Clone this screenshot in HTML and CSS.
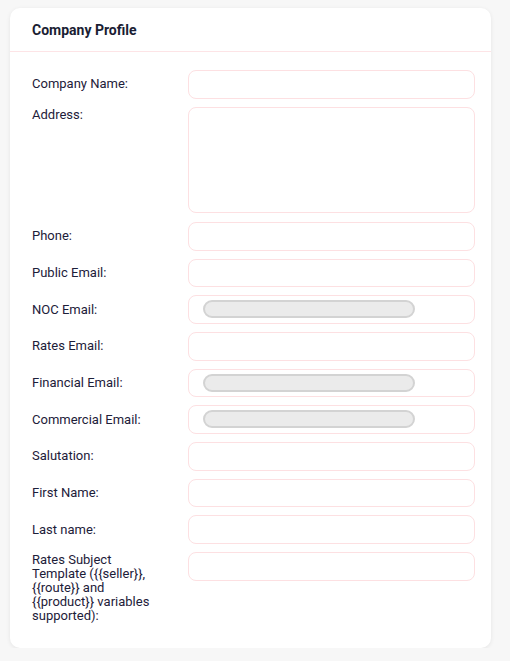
FILE: index.html
```html
<!DOCTYPE html>
<html lang="en">
<head>
<meta charset="utf-8">
<title>Company Profile</title>
<link rel="stylesheet" href="styles.css">
</head>
<body>
<div class="card">
  <div class="card-header">Company Profile</div>
  <div class="card-body">
    <div class="row"><label class="label">Company Name:</label><div class="field"><input class="input" type="text"></div></div>
    <div class="row row-top"><label class="label">Address:</label><div class="field field-tall"><textarea class="input textarea"></textarea></div></div>
    <div class="row"><label class="label">Phone:</label><div class="field"><input class="input" type="text"></div></div>
    <div class="row"><label class="label">Public Email:</label><div class="field"><input class="input" type="text"></div></div>
    <div class="row"><label class="label">NOC Email:</label><div class="field"><input class="input" type="text"><span class="redact"></span></div></div>
    <div class="row"><label class="label">Rates Email:</label><div class="field"><input class="input" type="text"></div></div>
    <div class="row"><label class="label">Financial Email:</label><div class="field"><input class="input" type="text"><span class="redact"></span></div></div>
    <div class="row"><label class="label">Commercial Email:</label><div class="field"><input class="input" type="text"><span class="redact"></span></div></div>
    <div class="row"><label class="label">Salutation:</label><div class="field"><input class="input" type="text"></div></div>
    <div class="row"><label class="label">First Name:</label><div class="field"><input class="input" type="text"></div></div>
    <div class="row"><label class="label">Last name:</label><div class="field"><input class="input" type="text"></div></div>
    <div class="row row-top"><label class="label label-multi">Rates Subject Template ({{seller}}, {{route}} and {{product}} variables supported):</label><div class="field"><input class="input" type="text"></div></div>
  </div>
</div>
</body>
</html>
```
FILE: styles.css
```css
html, body {
  margin: 0;
  padding: 0;
}
body {
  background: #f7f7f7;
  font-family: "Roboto", "Liberation Sans", sans-serif;
  color: #1d2039;
  padding: 8px 0 0 10px;
}
.card {
  width: 481px;
  height: 640px;
  box-sizing: border-box;
  background: #fff;
  border-radius: 10px;
  box-shadow: 0 1px 4px rgba(0, 0, 0, 0.08);
}
.card-header {
  height: 43px;
  border-bottom: 1px solid #fde4e6;
  padding-left: 22px;
  display: flex;
  align-items: center;
  font-weight: bold;
  font-size: 14px;
  color: #1a1d33;
}
.card-body {
  padding: 18px 16px 0 22px;
  display: flex;
  flex-direction: column;
  gap: 8px;
}
.row {
  display: grid;
  grid-template-columns: 156px 287px;
  align-items: center;
}
.row-top {
  align-items: start;
}
.label {
  font-size: 13px;
  line-height: 14px;
}
.row-top .label {
  padding-top: 1px;
}
.label-multi {
  padding-right: 32px;
}
.field {
  position: relative;
  height: 28.67px;
}
.field-tall {
  height: 107.3px;
}
.input {
  display: block;
  box-sizing: border-box;
  width: 100%;
  height: 28.67px;
  margin: 0;
  border: 1px solid #fde0e2;
  border-radius: 8px;
  background: #fff;
  outline: none;
  font: inherit;
}
.textarea {
  height: 106px;
  resize: none;
}
.redact {
  position: absolute;
  left: 15px;
  top: 5px;
  width: 212px;
  height: 18px;
  box-sizing: border-box;
  background: #ebebeb;
  border: 2px solid #d3d3d3;
  border-radius: 9px;
  filter: blur(0.5px);
}
```
